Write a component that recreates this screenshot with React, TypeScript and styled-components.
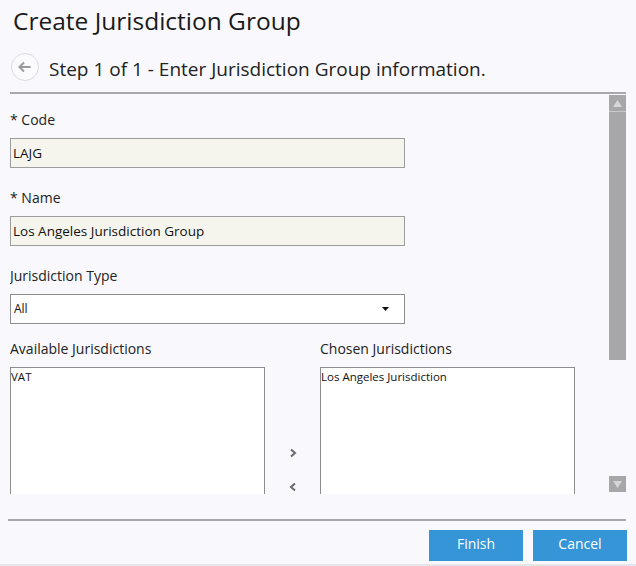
import React from "react";
import styled, { createGlobalStyle } from "styled-components";

const Global = createGlobalStyle`
  html, body { margin: 0; padding: 0; background: #f9f9fd; }
  body { font-family: "Open Sans", "Noto Sans", sans-serif; color: #222; }
`;

const Page = styled.div`
  width: 636px;
  height: 566px;
  box-sizing: border-box;
  border-bottom: 2px solid #e6e6ea;
  display: flex;
  flex-direction: column;
  overflow: hidden;
`;

const Title = styled.h1`
  margin: 0;
  padding: 6px 13px 0;
  font-size: 24.5px;
  line-height: 30px;
  font-weight: 400;
  color: #1a1a1a;
`;

const StepRow = styled.div`
  display: flex;
  align-items: center;
  gap: 10px;
  height: 30px;
  margin-top: 18px;
  padding-left: 11px;
`;

const BackButton = styled.button`
  width: 28px;
  height: 28px;
  border-radius: 50%;
  border: 1px solid #dcdcdf;
  background: #fbfbfd;
  padding: 0;
  display: flex;
  align-items: center;
  justify-content: center;
  align-self: flex-start;
  margin-top: -1px;
`;

const StepText = styled.div`
  font-size: 19px;
  line-height: 30px;
  color: #222;
`;

const Rule = styled.div<{ $top: number; $left: number }>`
  height: 2px;
  background: #a9a9ad;
  margin: ${(p) => p.$top}px 10px 0 ${(p) => p.$left}px;
`;

const ScrollArea = styled.div`
  height: 400px;
  margin: 0 10px;
  display: flex;
`;

const Content = styled.div`
  flex: 1;
  overflow: hidden;
  padding-top: 16px;
`;

const Field = styled.div<{ $gap: number }>`
  margin-top: ${(p) => p.$gap}px;
`;

const Label = styled.div`
  font-size: 14px;
  line-height: 20px;
  color: #222;
  margin-bottom: 8px;
`;

const TextBox = styled.div`
  width: 395px;
  height: 30px;
  box-sizing: border-box;
  border: 1px solid #9d9d9d;
  background: #f5f5ee;
  font-size: 13.5px;
  line-height: 28px;
  padding-left: 2px;
  color: #111;
`;

const Select = styled.div`
  width: 395px;
  height: 30px;
  box-sizing: border-box;
  border: 1px solid #8d8d8d;
  background: #fff;
  font-size: 12px;
  line-height: 28px;
  padding: 0 15px 0 3px;
  display: flex;
  align-items: center;
  justify-content: space-between;
  color: #111;
`;

const ListsRow = styled.div`
  margin-top: 15px;
  display: grid;
  grid-template-columns: 255px 55px 255px;
`;

const ListCol = styled.div``;

const ListBox = styled.div`
  height: 206px;
  box-sizing: border-box;
  border: 1px solid #8d8d8d;
  background: #fff;
  font-size: 11.5px;
  line-height: 17px;
  color: #111;
`;

const MoveCol = styled.div`
  display: flex;
  flex-direction: column;
  align-items: center;
  justify-content: center;
  gap: 14px;
  padding-top: 28px;
`;

const MoveButton = styled.button`
  width: 20px;
  height: 20px;
  padding: 0;
  border: none;
  background: transparent;
  display: flex;
  align-items: center;
  justify-content: center;
`;

const ScrollBar = styled.div`
  width: 17px;
  padding-top: 1px;
  display: flex;
  flex-direction: column;
`;

const ScrollBtn = styled.div`
  height: 16px;
  background: #a7a7a9;
  display: flex;
  align-items: center;
  justify-content: center;
`;

const Thumb = styled.div`
  height: 248px;
  background: #a7a7a9;
  border-top: 1px solid #c8c8cc;
`;

const Spacer = styled.div`
  flex: 1;
`;

const BottomGap = styled.div`
  height: 2px;
`;

const Footer = styled.div`
  display: flex;
  justify-content: flex-end;
  gap: 10px;
  margin-top: 9px;
  padding-right: 9px;
`;

const ActionButton = styled.button`
  width: 94px;
  height: 31px;
  border: none;
  background: #3595d6;
  color: #fff;
  font-family: "Open Sans", "Noto Sans", sans-serif;
  font-size: 14px;
  line-height: 28px;
  padding: 0 0 3px;
`;

const Chevron = ({ dir }: { dir: "left" | "right" }) => (
  <svg width="8" height="10" viewBox="0 0 8 10">
    <polyline
      points={dir === "right" ? "2,1.5 6,5 2,8.5" : "6,1.5 2,5 6,8.5"}
      fill="none"
      stroke="#6a6a6a"
      strokeWidth="2"
    />
  </svg>
);

const Tri = ({ up, color, w = 9, h = 7 }: { up: boolean; color: string; w?: number; h?: number }) => (
  <svg width={w} height={h} viewBox={`0 0 ${w} ${h}`}>
    <polygon points={up ? `${w / 2},0 ${w},${h} 0,${h}` : `0,0 ${w},0 ${w / 2},${h}`} fill={color} />
  </svg>
);

export default function App() {
  return (
    <>
      <Global />
      <Page>
        <Title>Create Jurisdiction Group</Title>
        <StepRow>
          <BackButton aria-label="Back">
            <svg width="14" height="12" viewBox="0 0 14 12">
              <path d="M1.5 6 H12.5 M6 1.5 L1.5 6 L6 10.5" fill="none" stroke="#9a9aa0" strokeWidth="2" />
            </svg>
          </BackButton>
          <StepText>Step 1 of 1 - Enter Jurisdiction Group information.</StepText>
        </StepRow>
        <Rule $top={8} $left={10} />
        <ScrollArea>
          <Content>
            <Field $gap={0}>
              <Label>* Code</Label>
              <TextBox>LAJG</TextBox>
            </Field>
            <Field $gap={20}>
              <Label>* Name</Label>
              <TextBox>Los Angeles Jurisdiction Group</TextBox>
            </Field>
            <Field $gap={20}>
              <Label>Jurisdiction Type</Label>
              <Select>
                <span>All</span>
                <Tri up={false} color="#111" w={7} h={4} />
              </Select>
            </Field>
            <ListsRow>
              <ListCol>
                <Label>Available Jurisdictions</Label>
                <ListBox>VAT</ListBox>
              </ListCol>
              <MoveCol>
                <MoveButton aria-label="Add">
                  <Chevron dir="right" />
                </MoveButton>
                <MoveButton aria-label="Remove">
                  <Chevron dir="left" />
                </MoveButton>
              </MoveCol>
              <ListCol>
                <Label>Chosen Jurisdictions</Label>
                <ListBox>Los Angeles Jurisdiction</ListBox>
              </ListCol>
            </ListsRow>
          </Content>
          <ScrollBar>
            <ScrollBtn>
              <Tri up color="#d6d6da" />
            </ScrollBtn>
            <Thumb />
            <Spacer />
            <ScrollBtn>
              <Tri up={false} color="#d6d6da" />
            </ScrollBtn>
            <BottomGap />
          </ScrollBar>
        </ScrollArea>
        <Rule $top={25} $left={8} />
        <Footer>
          <ActionButton>Finish</ActionButton>
          <ActionButton>Cancel</ActionButton>
        </Footer>
      </Page>
    </>
  );
}
